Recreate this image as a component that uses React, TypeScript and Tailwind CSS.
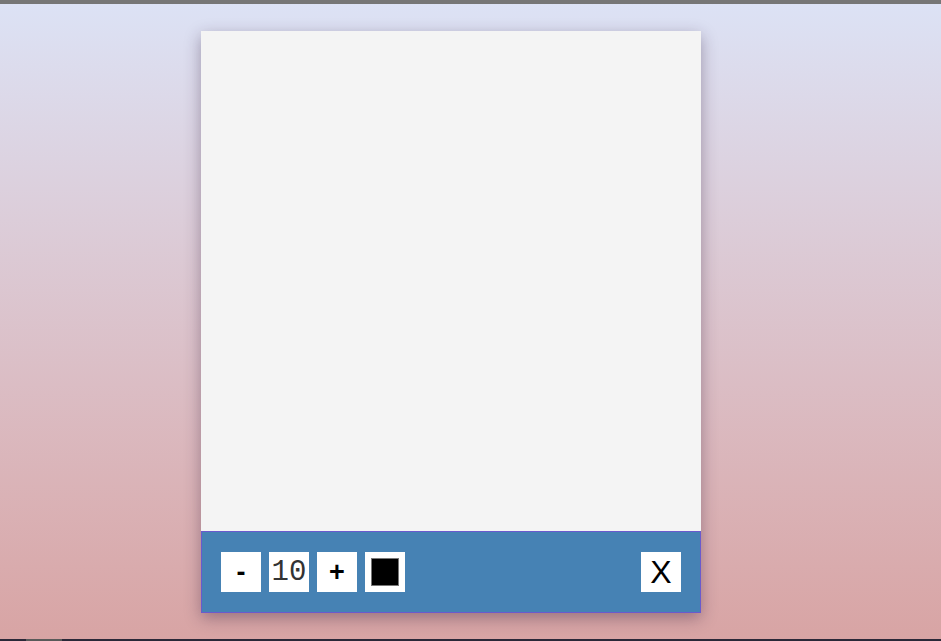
const App = () => {
  return (
    <div className="h-[641px] w-[941px] flex flex-col overflow-hidden" style={{ fontFamily: '"Liberation Sans", Arial, sans-serif' }}>
      {/* window top edge */}
      <div className="h-[4px] bg-[#767676] shrink-0" />

      <div className="flex-1 bg-gradient-to-b from-[#dce2f5] to-[#d8a4a4]">
        <div className="ml-[201px] mt-[27px] w-[500px] shadow-[0_5px_15px_rgba(50,30,60,0.38)]">
          {/* canvas */}
          <div className="h-[500px] bg-[#f4f4f4]" />

          {/* toolbar */}
          <div className="h-[82px] bg-[#4682b4] border border-[#6a5acd] flex items-center px-[19px]">
            <div className="flex gap-2">
              <button className="w-10 h-10 bg-white text-black text-[27px] font-bold leading-none flex items-center justify-center">-</button>
              <div className="w-10 h-10 bg-white text-[#333] text-[29px] leading-none flex items-center justify-center" style={{ fontFamily: '"Liberation Mono", "Courier New", monospace' }}>10</div>
              <button className="w-10 h-10 bg-white text-black text-[27px] font-bold leading-none flex items-center justify-center">+</button>
              <div className="w-10 h-10 bg-white flex items-center justify-center">
                <div className="w-[28px] h-[28px] border border-[#777] bg-black" />
              </div>
            </div>
            <button className="ml-auto w-10 h-10 bg-white text-black text-[32px] leading-none flex items-center justify-center">X</button>
          </div>
        </div>
      </div>

      {/* window bottom edge */}
      <div className="h-[2px] bg-[#2b2838] shrink-0 flex">
        <div className="ml-[26px] w-[36px] bg-[#5a5a5a]" />
      </div>
    </div>
  );
};

export default App;
